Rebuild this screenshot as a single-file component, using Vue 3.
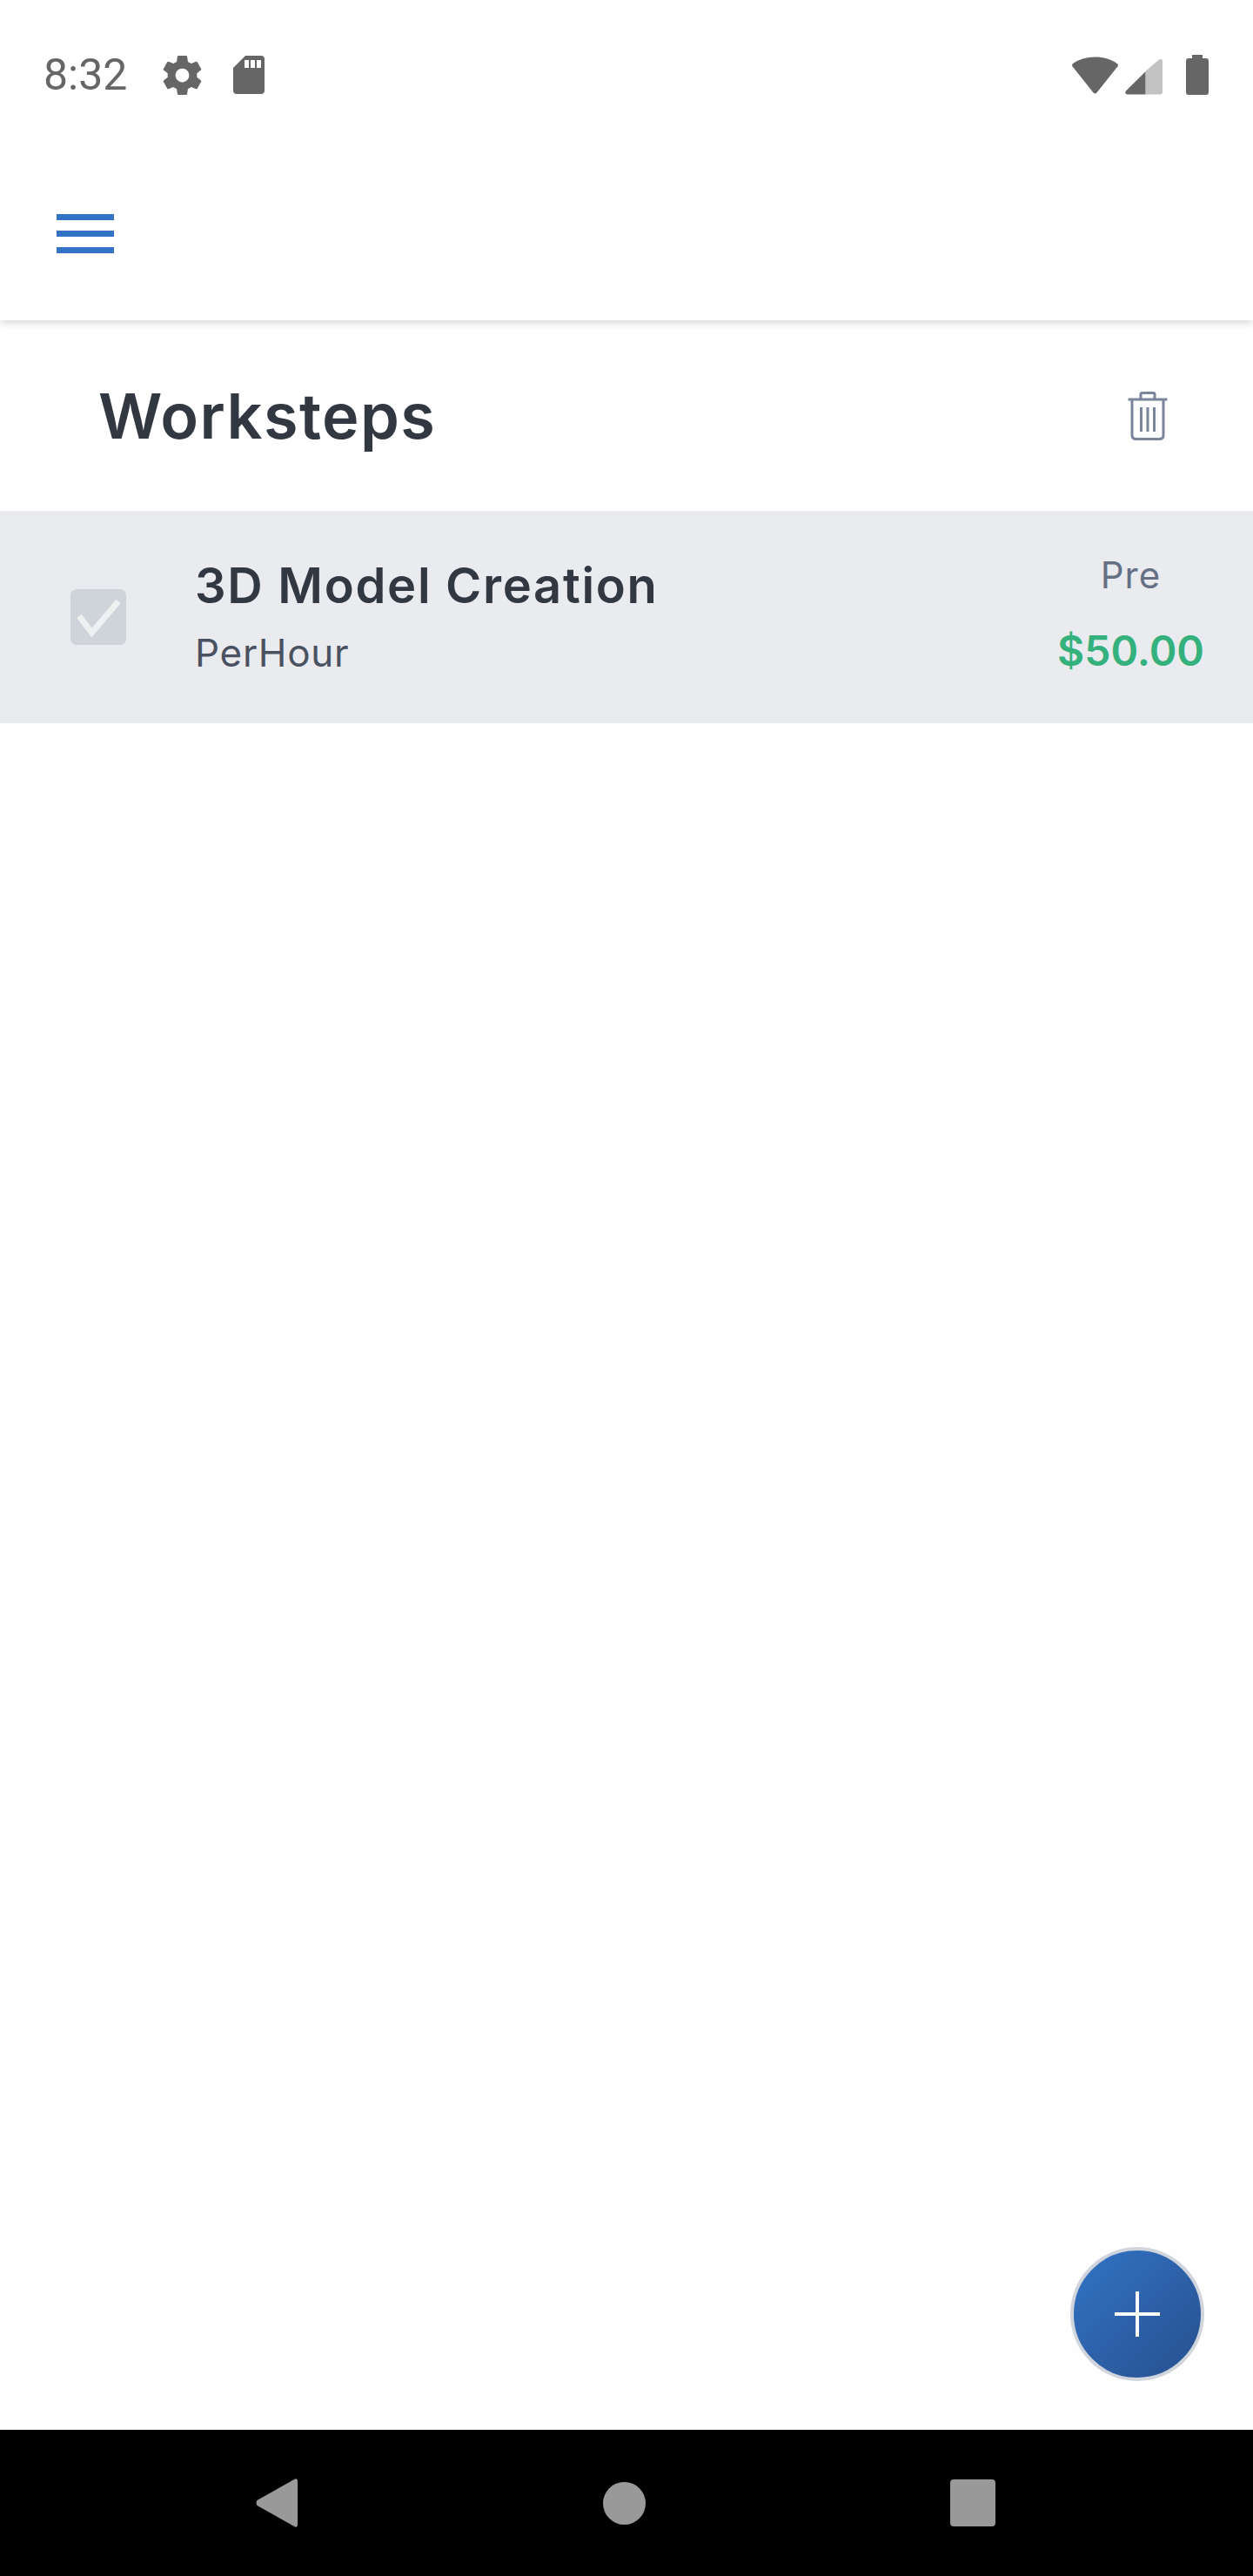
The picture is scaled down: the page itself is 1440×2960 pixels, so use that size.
<template>
  <div class="screen">
    <div class="status-bar">
      <span class="time">8:32</span>
      <svg class="ic-gear" viewBox="2.4 2 19.2 20">
        <path fill-rule="evenodd" d="M19.43 12.98c.04-.32.07-.64.07-.98s-.03-.66-.07-.98l2.11-1.65c.19-.15.24-.42.12-.64l-2-3.46c-.12-.22-.39-.3-.61-.22l-2.49 1c-.52-.4-1.08-.73-1.69-.98l-.38-2.65C14.46 2.18 14.25 2 14 2h-4c-.25 0-.46.18-.49.42l-.38 2.65c-.61.25-1.17.59-1.69.98l-2.49-1c-.23-.09-.49 0-.61.22l-2 3.46c-.13.22-.07.49.12.64l2.11 1.65c-.04.32-.07.65-.07.98s.03.66.07.98l-2.11 1.65c-.19.15-.24.42-.12.64l2 3.46c.12.22.39.3.61.22l2.49-1c.52.4 1.08.73 1.69.98l.38 2.65c.03.24.24.42.49.42h4c.25 0 .46-.18.49-.42l.38-2.65c.61-.25 1.17-.59 1.69-.98l2.49 1c.23.09.49 0 .61-.22l2-3.46c.12-.22.07-.49-.12-.64l-2.01-1.65zM12 15.5c-1.93 0-3.5-1.57-3.5-3.5s1.57-3.5 3.5-3.5 3.5 1.57 3.5 3.5-1.57 3.5-3.5 3.5z" />
      </svg>
      <svg class="ic-sd" viewBox="0 0 36 44">
        <path fill-rule="evenodd" d="M14 0H32Q36 0 36 4V40Q36 44 32 44H4Q0 44 0 40V14ZM13 5V14H18V5ZM20 5V14H25V5ZM27 5V14H32V5Z" />
      </svg>
      <span class="spacer"></span>
      <svg class="ic-wifi" viewBox="0 0 54 43">
        <path d="M27 0C37 0 47 3 53 8Q54.500 9.500 53.500 11L29 42Q27 44 25 42L0.500 11Q-0.500 9.500 1 8C7 3 17 0 27 0Z" />
      </svg>
      <svg class="ic-signal" viewBox="0 0 44 42">
        <path fill="#c2c2c2" d="M24 14.500L40 1Q44 -1 44 3V39Q44 42 41 42H24Z" />
        <path d="M24 15V42H3Q-1 42 1 38Z" />
      </svg>
      <svg class="ic-battery" viewBox="0 0 26 46">
        <path d="M7 0H19V4H23Q26 4 26 7V43Q26 46 23 46H3Q0 46 0 43V7Q0 4 3 4H7Z" />
      </svg>
    </div>

    <header class="app-header">
      <button class="menu-btn" aria-label="Menu">
        <span></span><span></span><span></span>
      </button>
    </header>

    <main class="content">
      <div class="title-row">
        <h1>Worksteps</h1>
        <button class="trash-btn" aria-label="Delete">
          <svg viewBox="0 0 46 56" fill="none" stroke="#7a859c" stroke-width="3">
            <path d="M0.500 9H45.500" />
            <path d="M15 8V3Q15 1.500 17 1.500H29Q31 1.500 31 3V8" />
            <path d="M5 9V50Q5 54.500 10 54.500H36Q41 54.500 41 50V9" />
            <path d="M15.500 18V46M23 18V46M30.500 18V46" />
          </svg>
        </button>
      </div>

      <div v-for="step in steps" :key="step.name" class="step-row">
        <div class="checkbox">
          <svg viewBox="0 0 64 64" fill="none" stroke="#eef0f2" stroke-width="7">
            <path d="M10 31L24.500 50L55 14" />
          </svg>
        </div>
        <div class="step-info">
          <div class="step-name">{{ step.name }}</div>
          <div class="step-unit">{{ step.unit }}</div>
        </div>
        <div class="step-side">
          <div class="step-phase">{{ step.phase }}</div>
          <div class="step-price">{{ step.price }}</div>
        </div>
      </div>

      <button class="fab" aria-label="Add">
        <span class="fab-h"></span>
        <span class="fab-v"></span>
      </button>
    </main>

    <nav class="nav-bar">
      <svg class="nav-back" viewBox="0 0 48 56">
        <path d="M45 0.500Q48 -0.500 48 3V53Q48 56.500 45 55.500L1.500 31Q-0.500 28 1.500 25Z" />
      </svg>
      <span class="nav-home"></span>
      <span class="nav-recent"></span>
    </nav>
  </div>
</template>

<script setup>
const steps = [
  { name: '3D Model Creation', unit: 'PerHour', phase: 'Pre', price: '$50.00' }
]
</script>

<style>
body {
  background: #fefefe;
}
</style>

<style scoped>
.screen {
  display: flex;
  flex-direction: column;
  width: 1440px;
  height: 2960px;
  overflow: hidden;
  font-family: Inter, "Liberation Sans", sans-serif;
  background: #fefefe;
}

.status-bar {
  display: flex;
  align-items: center;
  height: 172px;
  flex: none;
  padding: 0 51px 0 50px;
  box-sizing: border-box;
  background: #fff;
  fill: #666;
  position: relative;
  z-index: 2;
}

.time {
  font-family: Roboto, sans-serif;
  font-size: 50px;
  color: #666;
  width: 137px;
}

.ic-gear {
  width: 45px;
  height: 45px;
  margin-right: 36px;
}

.ic-sd {
  width: 36px;
  height: 44px;
}

.spacer {
  flex: 1;
}

.ic-wifi {
  width: 53px;
  height: 43px;
  margin-right: 8px;
}

.ic-signal {
  width: 43px;
  height: 42px;
  margin-right: 27px;
  margin-top: 3px;
}

.ic-battery {
  width: 26px;
  height: 46px;
}

.app-header {
  display: flex;
  align-items: center;
  height: 196px;
  flex: none;
  padding-left: 65px;
  padding-bottom: 4px;
  box-sizing: border-box;
  background: #fff;
  box-shadow: 0 2px 10px rgba(0, 0, 0, 0.18);
  position: relative;
  z-index: 1;
}

.menu-btn {
  display: flex;
  flex-direction: column;
  gap: 12px;
  width: 66px;
  padding: 0;
  border: 0;
  background: none;
}

.menu-btn span {
  display: block;
  height: 7px;
  background: #3273c5;
}

.content {
  flex: 1;
  position: relative;
  min-height: 0;
}

.title-row {
  display: flex;
  align-items: center;
  justify-content: space-between;
  height: 219px;
  padding: 0 58px 0 113px;
  box-sizing: border-box;
  background: #fff;
}

h1 {
  margin: 0;
  font-size: 72px;
  font-weight: 600;
  letter-spacing: 1.4px;
  color: #323842;
}

.trash-btn {
  display: flex;
  align-items: center;
  justify-content: center;
  width: 127px;
  height: 132px;
  padding: 0;
  border: 0;
  border-radius: 8px;
  background: #fefefe;
}

.trash-btn svg {
  width: 46px;
  height: 56px;
}

.step-row {
  display: flex;
  align-items: center;
  height: 244px;
  padding: 0 56px 0 81px;
  box-sizing: border-box;
  background: #eaebef;
}

.checkbox {
  display: flex;
  width: 64px;
  height: 64px;
  flex: none;
  margin-right: 79px;
  border-radius: 7px;
  background: #cfd4da;
}

.step-info {
  flex: 1;
  padding-bottom: 2px;
}

.step-name {
  font-size: 56px;
  font-weight: 600;
  letter-spacing: 1.7px;
  color: #323842;
  margin-bottom: 16px;
}

.step-unit {
  font-size: 44px;
  letter-spacing: 0.7px;
  color: #4a5261;
}

.step-side {
  text-align: right;
  padding-bottom: 6px;
}

.step-phase {
  font-size: 42px;
  letter-spacing: 1px;
  color: #667085;
  text-align: center;
  margin-bottom: 32px;
}

.step-price {
  font-size: 48px;
  font-weight: 600;
  color: #34b17d;
}

.fab {
  position: absolute;
  right: 56px;
  bottom: 56px;
  width: 154px;
  height: 154px;
  padding: 0;
  border: 4px solid #d0d5dd;
  border-radius: 50%;
  box-sizing: border-box;
  background: linear-gradient(135deg, #3273c5, #27508e);
}

.fab-h,
.fab-v {
  position: absolute;
  background: #fff;
}

.fab-h {
  left: 47px;
  top: 71px;
  width: 52px;
  height: 4px;
}

.fab-v {
  left: 71px;
  top: 47px;
  width: 4px;
  height: 52px;
}

.nav-bar {
  display: flex;
  align-items: center;
  height: 168px;
  flex: none;
  padding: 0 296px 0 294px;
  box-sizing: border-box;
  justify-content: space-between;
  background: #000;
}

.nav-back {
  width: 48px;
  height: 56px;
  fill: #999;
}

.nav-home {
  width: 49px;
  height: 49px;
  border-radius: 50%;
  background: #999;
}

.nav-recent {
  width: 52px;
  height: 54px;
  border-radius: 4px;
  background: #999;
}
</style>
